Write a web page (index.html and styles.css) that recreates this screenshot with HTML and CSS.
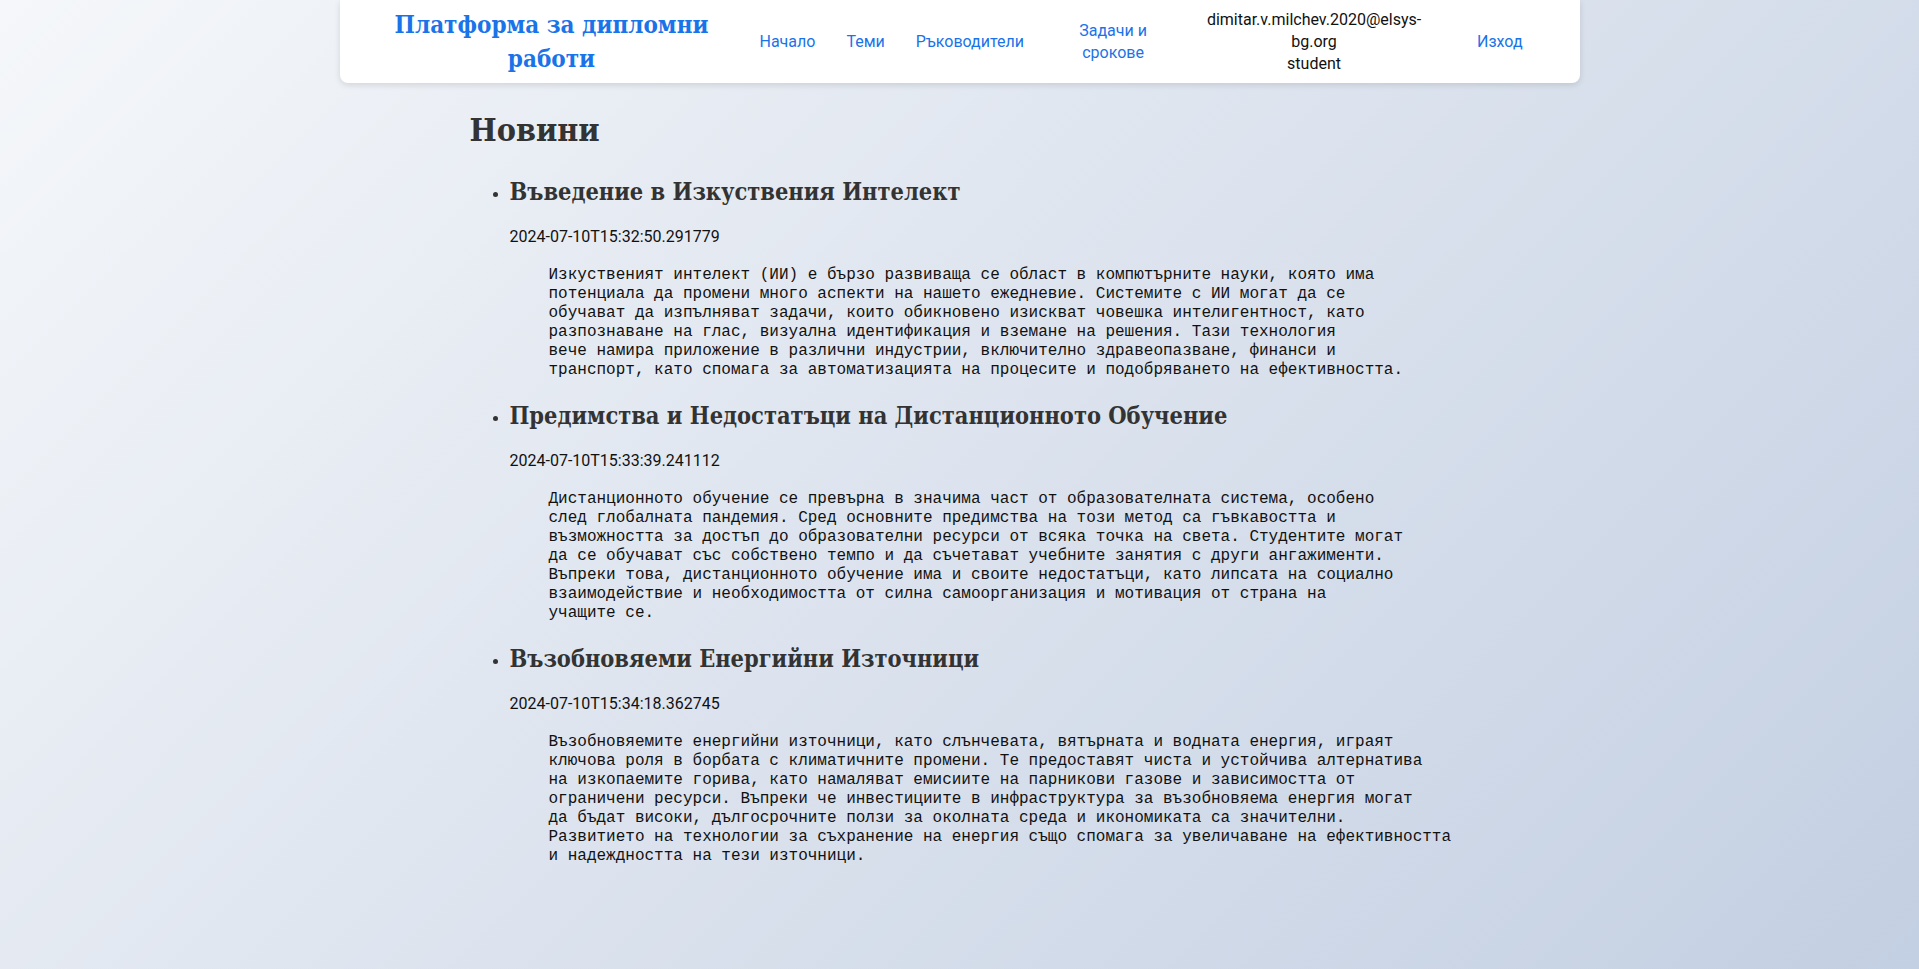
FILE: index.html
```html
<!DOCTYPE html>
<html lang="bg">
<head>
<meta charset="utf-8">
<title>Новини</title>
<link rel="stylesheet" href="styles.css">
</head>
<body>
<header class="topbar">
  <div class="brand">Платформа за дипломни работи</div>
  <nav class="nav">
    <a class="nav-link" href="#">Начало</a>
    <a class="nav-link" href="#">Теми</a>
    <a class="nav-link" href="#">Ръководители</a>
    <a class="nav-link nav-tasks" href="#">Задачи и срокове</a>
    <div class="user">dimitar.v.milchev.2020@elsys-bg.org<br>student</div>
    <a class="nav-link nav-logout" href="#">Изход</a>
  </nav>
</header>
<main class="content">
  <h1 class="page-title">Новини</h1>
  <ul class="news">
    <li class="news-item">
      <h2 class="news-title">Въведение в Изкуствения Интелект</h2>
      <p class="news-date">2024-07-10T15:32:50.291779</p>
      <pre class="news-body">Изкуственият интелект (ИИ) е бързо развиваща се област в компютърните науки, която има
потенциала да промени много аспекти на нашето ежедневие. Системите с ИИ могат да се
обучават да изпълняват задачи, които обикновено изискват човешка интелигентност, като
разпознаване на глас, визуална идентификация и вземане на решения. Тази технология
вече намира приложение в различни индустрии, включително здравеопазване, финанси и
транспорт, като спомага за автоматизацията на процесите и подобряването на ефективността.</pre>
    </li>
    <li class="news-item">
      <h2 class="news-title">Предимства и Недостатъци на Дистанционното Обучение</h2>
      <p class="news-date">2024-07-10T15:33:39.241112</p>
      <pre class="news-body">Дистанционното обучение се превърна в значима част от образователната система, особено
след глобалната пандемия. Сред основните предимства на този метод са гъвкавостта и
възможността за достъп до образователни ресурси от всяка точка на света. Студентите могат
да се обучават със собствено темпо и да съчетават учебните занятия с други ангажименти.
Въпреки това, дистанционното обучение има и своите недостатъци, като липсата на социално
взаимодействие и необходимостта от силна самоорганизация и мотивация от страна на
учащите се.</pre>
    </li>
    <li class="news-item">
      <h2 class="news-title">Възобновяеми Енергийни Източници</h2>
      <p class="news-date">2024-07-10T15:34:18.362745</p>
      <pre class="news-body">Възобновяемите енергийни източници, като слънчевата, вятърната и водната енергия, играят
ключова роля в борбата с климатичните промени. Те предоставят чиста и устойчива алтернатива
на изкопаемите горива, като намаляват емисиите на парникови газове и зависимостта от
ограничени ресурси. Въпреки че инвестициите в инфраструктура за възобновяема енергия могат
да бъдат високи, дългосрочните ползи за околната среда и икономиката са значителни.
Развитието на технологии за съхранение на енергия също спомага за увеличаване на ефективността
и надеждността на тези източници.</pre>
    </li>
  </ul>
</main>
</body>
</html>
```
FILE: styles.css
```css
html, body {
  margin: 0;
  padding: 0;
}
body {
  min-height: 100vh;
  background: linear-gradient(135deg, #f5f7fa 0%, #c3cfe2 100%);
  font-family: Roboto, "Liberation Sans", sans-serif;
  font-size: 16px;
  color: #222;
}
.topbar {
  width: 1240px;
  height: 83px;
  margin: 0 auto;
  background: #fff;
  border-radius: 0 0 8px 8px;
  box-shadow: 0 2px 6px rgba(0, 0, 0, 0.12);
  display: flex;
  align-items: center;
  box-sizing: border-box;
  padding-left: 47px;
}
.brand {
  width: 330px;
  text-align: center;
  font-family: "DejaVu Serif Condensed", "DejaVu Serif", serif;
  font-weight: bold;
  font-size: 24px;
  line-height: 34px;
  color: #1a73e8;
}
.nav {
  display: flex;
  align-items: center;
  margin-left: 43px;
}
.nav-link {
  color: #1a73e8;
  text-decoration: none;
  margin-right: 31px;
  line-height: 22px;
}
.nav-tasks {
  width: 116px;
  text-align: center;
}
.user {
  width: 224px;
  text-align: center;
  line-height: 22px;
  color: #111;
  margin-right: 51px;
}
.nav-logout {
  margin-right: 0;
}
.content {
  width: 980px;
  margin: 0 auto;
  padding-bottom: 40px;
}
.page-title {
  font-family: "DejaVu Serif Condensed", "DejaVu Serif", serif;
  font-size: 32px;
  font-weight: bold;
  color: #333;
  margin: 27px 0 24px;
  line-height: 1.3;
}
.news {
  margin: 0;
  padding-left: 40px;
}
.news-item {
  color: #333;
}
.news-title {
  font-family: "DejaVu Serif Condensed", "DejaVu Serif", serif;
  font-size: 23.4px;
  font-weight: bold;
  color: #333;
  margin: 20px 0 19px;
  line-height: 32px;
}
.news-date {
  margin: 16px 0;
  color: #111;
  line-height: 1.2;
}
.news-body {
  font-family: "Liberation Mono", monospace;
  font-size: 16px;
  line-height: 19px;
  color: #111;
  margin: 20px 0 16px 39px;
}
```
